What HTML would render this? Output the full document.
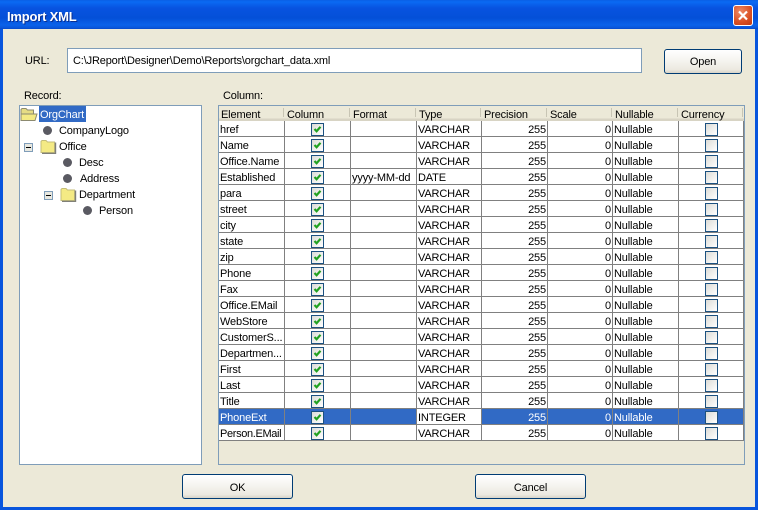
<!DOCTYPE html>
<html><head><meta charset="utf-8"><title>Import XML</title>
<style>
html,body{margin:0;padding:0;width:758px;height:510px;overflow:hidden;background:#ece9d8}
body{position:relative;font:11px/16px "Liberation Sans",sans-serif;color:#000;letter-spacing:-.15px}
div,span,svg{position:absolute;box-sizing:border-box}
#tb{left:0;top:0;width:758px;height:29px;background:linear-gradient(#0a5fe6 0,#0a6af3 2px,#0853e0 8px,#0450d8 18px,#0a62ea 25px,#0a55d8 28px,#0347c8 29px)}
#ttl{left:7px;top:8px;font:bold 13px/18px "Liberation Sans",sans-serif;color:#fff;text-shadow:1px 1px 0 #0a2f90;letter-spacing:-.2px}
.bd{background:#0855dd}
#cl{left:733px;top:5px;width:20px;height:21px;border:1px solid #fff;border-radius:3px;background:radial-gradient(circle at 35% 30%,#ee8a66,#d94f22 60%,#bf3a12)}
.l{white-space:nowrap}
#url{left:67px;top:48px;width:575px;height:25px;background:#fff;border:1px solid #7f9db9;padding:4px 0 0 5px;white-space:nowrap}
.btn{border:1px solid #003c74;border-radius:3px;background:linear-gradient(#fff,#f4f3ee 50%,#ece9e0 85%,#d8d4c8);text-align:center;line-height:25px;color:#000}
#tree{left:19px;top:105px;width:183px;height:360px;background:#fff;border:1px solid #7f9db9}
#frame{left:218px;top:105px;width:527px;height:360px;border:1px solid #7f9db9;background:#ece9d8}
#sel{left:39px;top:106px;width:47px;height:16px;background:#316ac5}
.dot{width:9px;height:9px;border-radius:50%;background:#5a5a62}
table{position:absolute;left:219px;top:106px;border-collapse:separate;border-spacing:0;table-layout:fixed;width:525px}
th{height:15px;padding:4px 0 0 2px;box-sizing:border-box;font-weight:normal;text-align:left;line-height:11px;background:linear-gradient(#ece9d8 0,#ece9d8 12px,#d8d4c4 13px,#d8d4c4 15px);position:relative;white-space:nowrap}
th:after{content:"";position:absolute;right:1px;top:2px;height:9px;width:1px;background:#c8c5b4}
td{height:16px;padding:4px 0 0 1px;border-right:1px solid #808080;border-bottom:1px solid #808080;background:#fff;overflow:hidden;white-space:nowrap;line-height:11px;box-sizing:border-box}
td.n{text-align:right;padding:4px 1px 0 0}
td.c{position:relative;padding:0}
tr.s td{background:#316ac5;color:#fff}
tr.s td.w{background:#fff;color:#000}
.cb{left:26px;top:2px;width:13px;height:13px;border:1px solid #1c5180;background:linear-gradient(135deg,#dcdcd7,#fff)}
.cb svg{left:1px;top:1px;width:9px;height:9px}
</style></head>
<body>
<svg width="0" height="0" style="position:absolute"><defs>
<symbol id="ck" viewBox="0 0 9 9"><path d="M1.5 4L3.6 6.2 7.5 1.8" fill="none" stroke="#21a121" stroke-width="2.2"/></symbol>
<symbol id="fo" viewBox="0 0 18 15"><path d="M1 13.5V2.5L2 1.5H6L7.5 3H14.5V13.5Z" fill="#f4ea84" stroke="#c4bd78"/><path d="M15.5 3.5V14.5H2" fill="none" stroke="#808078" stroke-width="1.4"/></symbol>
<symbol id="op" viewBox="0 0 18 15"><path d="M1 13V2.5L2 1.5H6L7.5 3H13.5V7H1Z" fill="#e6dc84" stroke="#8c8a70"/><path d="M1 13.5V7H17L15 13.5Z" fill="#f4ea84" stroke="#8c8a70"/></symbol>
<symbol id="mi" viewBox="0 0 9 9"><rect x=".5" y=".5" width="8" height="8" fill="#e8e8e0" stroke="#7f9db9"/><path d="M2 4.5H7" stroke="#000"/></symbol>
</defs></svg>

<div id="tb"></div>
<div class="bd" style="left:0;top:29px;width:3px;height:481px"></div>
<div class="bd" style="left:755px;top:29px;width:3px;height:481px"></div>
<div class="bd" style="left:0;top:507px;width:758px;height:3px"></div>
<div id="ttl">Import XML</div>
<div id="cl"><svg style="left:3px;top:4px" width="12" height="11" viewBox="0 0 12 11"><path d="M2 1.5L10 9.5M10 1.5L2 9.5" stroke="#fff" stroke-width="2.2" fill="none"/></svg></div>

<span class="l" style="left:25px;top:53px">URL:</span>
<div id="url">C:\JReport\Designer\Demo\Reports\orgchart_data.xml</div>
<div class="btn" style="left:664px;top:49px;width:78px;height:25px">Open</div>

<span class="l" style="left:24px;top:88px">Record:</span>
<span class="l" style="left:223px;top:88px">Column:</span>

<div id="tree"></div>
<div id="sel"></div>
<svg style="left:20px;top:107px" width="18" height="15"><use href="#op"/></svg>
<span class="l" style="left:40px;top:107px;color:#fff">OrgChart</span>
<div class="dot" style="left:43px;top:126px"></div>
<span class="l" style="left:59px;top:123px">CompanyLogo</span>
<svg style="left:24px;top:143px" width="9" height="9"><use href="#mi"/></svg>
<svg style="left:40px;top:139px" width="18" height="15"><use href="#fo"/></svg>
<span class="l" style="left:59px;top:139px">Office</span>
<div class="dot" style="left:63px;top:158px"></div>
<span class="l" style="left:79px;top:155px">Desc</span>
<div class="dot" style="left:63px;top:174px"></div>
<span class="l" style="left:80px;top:171px">Address</span>
<svg style="left:44px;top:191px" width="9" height="9"><use href="#mi"/></svg>
<svg style="left:60px;top:187px" width="18" height="15"><use href="#fo"/></svg>
<span class="l" style="left:79px;top:187px">Department</span>
<div class="dot" style="left:83px;top:206px"></div>
<span class="l" style="left:99px;top:203px">Person</span>

<div id="frame"></div>
<table>
<colgroup><col style="width:66px"><col style="width:66px"><col style="width:66px"><col style="width:65px"><col style="width:66px"><col style="width:65px"><col style="width:66px"><col style="width:65px"></colgroup>
<tr><th>Element</th><th>Column</th><th>Format</th><th>Type</th><th>Precision</th><th>Scale</th><th>Nullable</th><th>Currency</th></tr>
<tr><td>href</td><td class="c"><div class="cb"><svg><use href="#ck"/></svg></div></td><td></td><td>VARCHAR</td><td class="n">255</td><td class="n">0</td><td>Nullable</td><td class="c"><div class="cb"></div></td></tr>
<tr><td>Name</td><td class="c"><div class="cb"><svg><use href="#ck"/></svg></div></td><td></td><td>VARCHAR</td><td class="n">255</td><td class="n">0</td><td>Nullable</td><td class="c"><div class="cb"></div></td></tr>
<tr><td>Office.Name</td><td class="c"><div class="cb"><svg><use href="#ck"/></svg></div></td><td></td><td>VARCHAR</td><td class="n">255</td><td class="n">0</td><td>Nullable</td><td class="c"><div class="cb"></div></td></tr>
<tr><td>Established</td><td class="c"><div class="cb"><svg><use href="#ck"/></svg></div></td><td>yyyy-MM-dd</td><td>DATE</td><td class="n">255</td><td class="n">0</td><td>Nullable</td><td class="c"><div class="cb"></div></td></tr>
<tr><td>para</td><td class="c"><div class="cb"><svg><use href="#ck"/></svg></div></td><td></td><td>VARCHAR</td><td class="n">255</td><td class="n">0</td><td>Nullable</td><td class="c"><div class="cb"></div></td></tr>
<tr><td>street</td><td class="c"><div class="cb"><svg><use href="#ck"/></svg></div></td><td></td><td>VARCHAR</td><td class="n">255</td><td class="n">0</td><td>Nullable</td><td class="c"><div class="cb"></div></td></tr>
<tr><td>city</td><td class="c"><div class="cb"><svg><use href="#ck"/></svg></div></td><td></td><td>VARCHAR</td><td class="n">255</td><td class="n">0</td><td>Nullable</td><td class="c"><div class="cb"></div></td></tr>
<tr><td>state</td><td class="c"><div class="cb"><svg><use href="#ck"/></svg></div></td><td></td><td>VARCHAR</td><td class="n">255</td><td class="n">0</td><td>Nullable</td><td class="c"><div class="cb"></div></td></tr>
<tr><td>zip</td><td class="c"><div class="cb"><svg><use href="#ck"/></svg></div></td><td></td><td>VARCHAR</td><td class="n">255</td><td class="n">0</td><td>Nullable</td><td class="c"><div class="cb"></div></td></tr>
<tr><td>Phone</td><td class="c"><div class="cb"><svg><use href="#ck"/></svg></div></td><td></td><td>VARCHAR</td><td class="n">255</td><td class="n">0</td><td>Nullable</td><td class="c"><div class="cb"></div></td></tr>
<tr><td>Fax</td><td class="c"><div class="cb"><svg><use href="#ck"/></svg></div></td><td></td><td>VARCHAR</td><td class="n">255</td><td class="n">0</td><td>Nullable</td><td class="c"><div class="cb"></div></td></tr>
<tr><td>Office.EMail</td><td class="c"><div class="cb"><svg><use href="#ck"/></svg></div></td><td></td><td>VARCHAR</td><td class="n">255</td><td class="n">0</td><td>Nullable</td><td class="c"><div class="cb"></div></td></tr>
<tr><td>WebStore</td><td class="c"><div class="cb"><svg><use href="#ck"/></svg></div></td><td></td><td>VARCHAR</td><td class="n">255</td><td class="n">0</td><td>Nullable</td><td class="c"><div class="cb"></div></td></tr>
<tr><td>CustomerS...</td><td class="c"><div class="cb"><svg><use href="#ck"/></svg></div></td><td></td><td>VARCHAR</td><td class="n">255</td><td class="n">0</td><td>Nullable</td><td class="c"><div class="cb"></div></td></tr>
<tr><td>Departmen...</td><td class="c"><div class="cb"><svg><use href="#ck"/></svg></div></td><td></td><td>VARCHAR</td><td class="n">255</td><td class="n">0</td><td>Nullable</td><td class="c"><div class="cb"></div></td></tr>
<tr><td>First</td><td class="c"><div class="cb"><svg><use href="#ck"/></svg></div></td><td></td><td>VARCHAR</td><td class="n">255</td><td class="n">0</td><td>Nullable</td><td class="c"><div class="cb"></div></td></tr>
<tr><td>Last</td><td class="c"><div class="cb"><svg><use href="#ck"/></svg></div></td><td></td><td>VARCHAR</td><td class="n">255</td><td class="n">0</td><td>Nullable</td><td class="c"><div class="cb"></div></td></tr>
<tr><td>Title</td><td class="c"><div class="cb"><svg><use href="#ck"/></svg></div></td><td></td><td>VARCHAR</td><td class="n">255</td><td class="n">0</td><td>Nullable</td><td class="c"><div class="cb"></div></td></tr>
<tr class="s"><td>PhoneExt</td><td class="c"><div class="cb"><svg><use href="#ck"/></svg></div></td><td></td><td class="w">INTEGER</td><td class="n">255</td><td class="n">0</td><td>Nullable</td><td class="c"><div class="cb"></div></td></tr>
<tr><td style="letter-spacing:-.35px">Person.EMail</td><td class="c"><div class="cb"><svg><use href="#ck"/></svg></div></td><td></td><td>VARCHAR</td><td class="n">255</td><td class="n">0</td><td>Nullable</td><td class="c"><div class="cb"></div></td></tr>
</table>

<div class="btn" style="left:182px;top:474px;width:111px;height:25px;line-height:26px">OK</div>
<div class="btn" style="left:475px;top:474px;width:111px;height:25px;line-height:26px">Cancel</div>
</body></html>
